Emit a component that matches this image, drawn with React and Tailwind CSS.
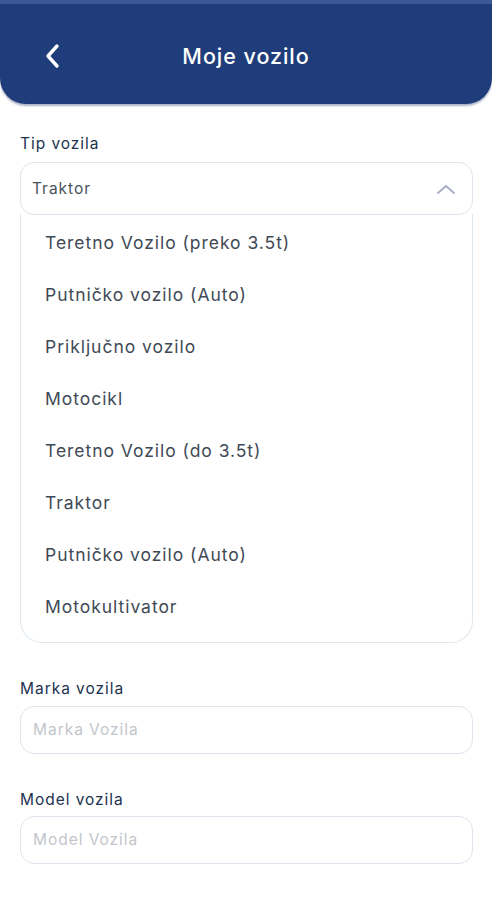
export default function App() {
    const options = [
        'Teretno Vozilo (preko 3.5t)',
        'Putničko vozilo (Auto)',
        'Priključno vozilo',
        'Motocikl',
        'Teretno Vozilo (do 3.5t)',
        'Traktor',
        'Putničko vozilo (Auto)',
        'Motokultivator',
    ];

    return (
        <div className="min-h-[900px] w-[492px] bg-white font-['Inter',sans-serif] tracking-[0.06em]">
            {/* Header */}
            <div className="h-[4px] bg-[#3d5898]" />
            <div className="flex h-[100px] items-center rounded-b-[26px] bg-[#1f3d7a] px-[42px] pt-[4px] shadow-[0_2px_2px_rgba(20,40,90,0.35)]">
                <svg width="22" height="28" viewBox="0 0 22 28" fill="none" stroke="white" strokeWidth="3.4" strokeLinecap="round" strokeLinejoin="round">
                    <path d="M15 4 L6 14 L15 24" />
                </svg>
                <div className="flex-1 pr-[22px] text-center text-[21.5px] font-medium text-white">Moje vozilo</div>
            </div>

            <div className="pl-[20px] pr-[19px] pt-[28px]">
                {/* Tip vozila */}
                <div className="text-[15.5px] text-[#22324f]">Tip vozila</div>
                <div className="mt-[7px] flex h-[53px] items-center justify-between rounded-[14px] border border-[#dfe5ee] px-[11px]">
                    <span className="text-[15.5px] text-[#4a525c]">Traktor</span>
                    <svg width="22" height="14" viewBox="0 0 22 14" fill="none" stroke="#a9afc6" strokeWidth="2" strokeLinecap="round" strokeLinejoin="round" className="mr-[4px]">
                        <path d="M3 11 L11 4 L19 11" />
                    </svg>
                </div>
                <div className="-mt-px flex flex-col rounded-b-[22px] border border-t-0 border-[#dfe7ee] pb-[9px] pt-[3px]">
                    {options.map((o, i) => (
                        <div key={i} className="flex h-[52px] items-center px-[24px] text-[17.5px] text-[#3f4a56]">
                            {o}
                        </div>
                    ))}
                </div>

                {/* Marka vozila */}
                <div className="mt-[34px] text-[15.5px] text-[#22324f]">Marka vozila</div>
                <div className="mt-[5px] flex h-[48px] items-center rounded-[14px] border border-[#dfe5ee] px-[12px]">
                    <span className="text-[15.5px] text-[#c2c6cc]">Marka Vozila</span>
                </div>

                {/* Model vozila */}
                <div className="mt-[34px] text-[15.5px] text-[#22324f]">Model vozila</div>
                <div className="mt-[5px] flex h-[48px] items-center rounded-[14px] border border-[#dfe5ee] px-[12px]">
                    <span className="text-[15.5px] text-[#c2c6cc]">Model Vozila</span>
                </div>
            </div>
        </div>
    );
}
